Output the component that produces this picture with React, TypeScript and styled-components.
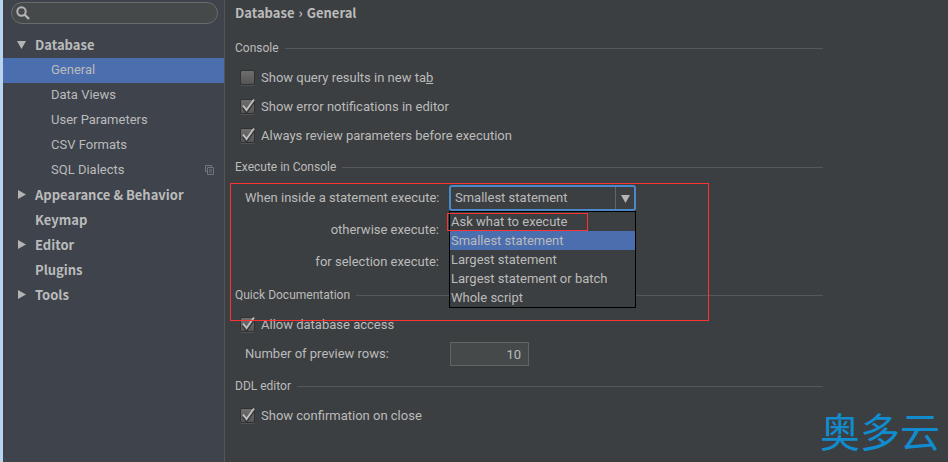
import React from "react";
import styled, { createGlobalStyle } from "styled-components";

const boldFamily = `"Noto Sans CJK SC", sans-serif`;

const GlobalStyle = createGlobalStyle`
  *, *::before, *::after { box-sizing: border-box; }
  body {
    margin: 0;
    background: #3c3f41;
    color: #bbbbbb;
    font: 13px/20px Roboto, "Noto Sans CJK SC", sans-serif;
  }
  button, input, select { font: inherit; color: inherit; margin: 0; }
`;

const Page = styled.div`
  position: relative;
  display: flex;
  min-height: 100vh;
  overflow: hidden;
`;

const Sidebar = styled.aside`
  flex: 0 0 225px;
  min-width: 0;
  background: #3e434c;
  border-left: 3px solid #b9d4ef;
  border-right: 1px solid #555555;
`;

const SearchBox = styled.label`
  display: flex;
  align-items: center;
  height: 22px;
  margin: 2px 6px 9px 8px;
  padding: 0 8px 0 4px;
  gap: 4px;
  background: #45494a;
  border: 1px solid #6a6c6c;
  border-radius: 11px;
`;

const SearchInput = styled.input`
  flex: 1;
  min-width: 0;
  height: 18px;
  padding: 0;
  border: 0;
  outline: 0;
  background: transparent;
`;

const Tree = styled.ul`
  margin: 0;
  padding: 0;
  list-style: none;
`;

const TreeRow = styled.button<{ $child?: boolean; $selected?: boolean }>`
  display: flex;
  align-items: center;
  width: 100%;
  height: 25px;
  padding: 0 9px 2px ${(p) => (p.$child ? 48 : 14)}px;
  border: 0;
  text-align: left;
  font-weight: ${(p) => (p.$child ? 400 : 700)};
  font-family: ${(p) => (p.$child ? "inherit" : boldFamily)};
  background: ${(p) => (p.$selected ? "#4b6eaf" : "transparent")};
`;

const Arrow = styled.span`
  display: flex;
  flex: 0 0 18px;
`;

const RowText = styled.span`
  flex: 1;
`;

const Main = styled.main`
  flex: 1;
  min-width: 0;
  padding: 3px 125px 16px 10px;
`;

const Breadcrumb = styled.h1`
  display: flex;
  gap: 4px;
  margin: 0 0 15px;
  font: 700 13px/20px ${boldFamily};
`;

const Group = styled.section`
  margin-bottom: 7px;
`;

const GroupTitle = styled.h2`
  display: flex;
  align-items: center;
  gap: 6px;
  margin: 0 0 5px;
  font-size: 12px;
  line-height: 20px;
  font-weight: 400;

  &::after {
    content: "";
    flex: 1;
    height: 1px;
    background: #555758;
  }
`;

const CheckRow = styled.label`
  display: flex;
  align-items: center;
  gap: 6px;
  width: max-content;
  height: 29px;
  padding-left: 5px;
`;

const CheckFrame = styled.span`
  display: grid;
  width: 15px;
  height: 18px;

  > * { grid-area: 1 / 1; }
`;

const CheckInput = styled.input`
  appearance: none;
  align-self: center;
  width: 15px;
  height: 15px;
  border: 1px solid #2f3132;
  border-radius: 2px;
  background: linear-gradient(#6e6e6e, #555555);
  box-shadow: 0 1px 0 #505253;

  & + svg { visibility: hidden; pointer-events: none; }
  &:checked + svg { visibility: visible; }
`;

const Fields = styled.div`
  position: relative;
  padding-left: 10px;
`;

const FieldRow = styled.div<{ $height: number }>`
  display: grid;
  grid-template-columns: 194px 187px;
  column-gap: 10px;
  align-items: center;
  height: ${(p) => p.$height}px;
`;

const FieldLabel = styled.label<{ $end?: boolean }>`
  text-align: ${(p) => (p.$end ? "right" : "left")};
  white-space: nowrap;
`;

const Combo = styled.div`
  position: relative;
  display: flex;
  height: 26px;
  border: 2px solid #4b88c7;
  border-radius: 3px;
  background: #3c3f41;
`;

const ComboSelect = styled.select`
  appearance: none;
  flex: 1;
  min-width: 0;
  height: 22px;
  padding: 0 4px;
  border: 0;
  outline: 0;
  background: transparent;
`;

const ComboArrow = styled.span`
  display: grid;
  flex: 0 0 19px;
  place-items: center;
  border-left: 1px solid #646464;
  pointer-events: none;
`;

const Popup = styled.ul`
  position: absolute;
  z-index: 1;
  top: 100%;
  left: -2px;
  right: -2px;
  margin: 2px 0 0;
  padding: 0;
  border: 1px solid #000000;
  background: #3c3f41;
  list-style: none;
`;

const Option = styled.button<{ $selected: boolean }>`
  display: block;
  width: 100%;
  height: 19px;
  padding: 0 1px;
  border: 0;
  line-height: 19px;
  text-align: left;
  background: ${(p) => (p.$selected ? "#4b6eaf" : "transparent")};
`;

const Mark = styled.div`
  position: absolute;
  z-index: 2;
  border: 1px solid #ff3333;
  pointer-events: none;
`;

const SectionMark = styled(Mark)`
  top: 1px;
  left: -5px;
  width: 479px;
  height: 138px;
`;

const OptionMark = styled(Mark)`
  top: 31px;
  left: 212px;
  width: 141px;
  height: 18px;
`;

const NumberInput = styled.input`
  width: 79px;
  height: 24px;
  margin-left: 1px;
  padding: 0 7px;
  border: 1px solid #646464;
  outline: 0;
  text-align: right;
  background: #45494a;
`;

const Watermark = styled.div`
  position: absolute;
  right: 8px;
  bottom: 8px;
  color: #108ccf;
  font: 400 40px/48px "Noto Sans CJK SC", sans-serif;
`;

function Triangle({ down }: { down?: boolean }) {
  return (
    <svg width="9" height="9" viewBox="0 0 9 9" fill="#b4b4b4" aria-hidden="true">
      <path d={down ? "M0 1h9L4.5 9z" : "M1 0l8 4.5L1 9z"} />
    </svg>
  );
}

function Check({ label, checked }: { label: React.ReactNode; checked?: boolean }) {
  return (
    <CheckRow>
      <CheckFrame>
        <CheckInput type="checkbox" defaultChecked={checked} />
        <svg width="15" height="18" viewBox="0 0 15 18" fill="none" aria-hidden="true">
          <path d="M3 9.5l3.5 4.5L14 3.5" stroke="#303234" strokeWidth="2.5" />
          <path d="M3 7.5l3.5 4.5L14 1.5" stroke="#bdbdbd" strokeWidth="2" />
        </svg>
      </CheckFrame>
      <span>{label}</span>
    </CheckRow>
  );
}

type Node = { text: string; arrow?: "down" | "right"; child?: boolean; selected?: boolean; copy?: boolean };

const nodes: Node[] = [
  { text: "Database", arrow: "down" },
  { text: "General", child: true, selected: true },
  { text: "Data Views", child: true },
  { text: "User Parameters", child: true },
  { text: "CSV Formats", child: true },
  { text: "SQL Dialects", child: true, copy: true },
  { text: "Appearance & Behavior", arrow: "right" },
  { text: "Keymap" },
  { text: "Editor", arrow: "right" },
  { text: "Plugins" },
  { text: "Tools", arrow: "right" },
];

const options = [
  "Ask what to execute",
  "Smallest statement",
  "Largest statement",
  "Largest statement or batch",
  "Whole script",
];

export default function App() {
  const [value, setValue] = React.useState(options[1]);

  return (
    <Page>
      <GlobalStyle />
      <Sidebar>
        <SearchBox>
          <svg width="14" height="14" viewBox="0 0 14 14" fill="none" stroke="#b4b4b4" aria-hidden="true">
            <circle cx="5.5" cy="5.5" r="4.2" strokeWidth="2" />
            <path d="M8.5 8.5l4.5 4.5" strokeWidth="2.4" />
          </svg>
          <SearchInput type="text" size={10} aria-label="Search settings" />
        </SearchBox>
        <Tree>
          {nodes.map((n) => (
            <li key={n.text}>
              <TreeRow type="button" $child={n.child} $selected={n.selected}>
                {!n.child && <Arrow>{n.arrow && <Triangle down={n.arrow === "down"} />}</Arrow>}
                <RowText>{n.text}</RowText>
                {n.copy && (
                  <svg width="10" height="10" viewBox="0 0 10 10" fill="none" stroke="#72767b" aria-hidden="true">
                    <path d="M2.5 6.5h-2v-6h6v2M2.5 2.5h6v7h-6zM4 5h3M4 7h3" />
                  </svg>
                )}
              </TreeRow>
            </li>
          ))}
        </Tree>
      </Sidebar>

      <Main>
        <Breadcrumb>
          <span>Database</span>
          <span>›</span>
          <span>General</span>
        </Breadcrumb>

        <Group>
          <GroupTitle>Console</GroupTitle>
          <Check label={<>Show query results in new ta<u>b</u></>} />
          <Check label="Show error notifications in editor" checked />
          <Check label="Always review parameters before execution" checked />
        </Group>

        <Group>
          <GroupTitle>Execute in Console</GroupTitle>
          <Fields>
            <FieldRow $height={32}>
              <FieldLabel $end htmlFor="inside">When inside a statement execute:</FieldLabel>
              <Combo>
                <ComboSelect id="inside" value={value} onChange={(e) => setValue(e.target.value)}>
                  {options.map((o) => <option key={o}>{o}</option>)}
                </ComboSelect>
                <ComboArrow><Triangle down /></ComboArrow>
                <Popup aria-label="Statement choices">
                  {options.map((o) => (
                    <li key={o}>
                      <Option type="button" $selected={o === value} onClick={() => setValue(o)}>{o}</Option>
                    </li>
                  ))}
                </Popup>
              </Combo>
            </FieldRow>
            <FieldRow $height={32}>
              <FieldLabel as="span" $end>otherwise execute:</FieldLabel>
            </FieldRow>
            <FieldRow $height={32}>
              <FieldLabel as="span" $end>for selection execute:</FieldLabel>
            </FieldRow>
            <SectionMark />
            <OptionMark />
          </Fields>
        </Group>

        <Group>
          <GroupTitle>Quick Documentation</GroupTitle>
          <Check label="Allow database access" checked />
          <Fields>
            <FieldRow $height={30}>
              <FieldLabel htmlFor="rows">Number of preview rows:</FieldLabel>
              <NumberInput id="rows" type="text" inputMode="numeric" defaultValue="10" />
            </FieldRow>
          </Fields>
        </Group>

        <Group>
          <GroupTitle>DDL editor</GroupTitle>
          <Check label="Show confirmation on close" checked />
        </Group>
      </Main>
      <Watermark>奥多云</Watermark>
    </Page>
  );
}
